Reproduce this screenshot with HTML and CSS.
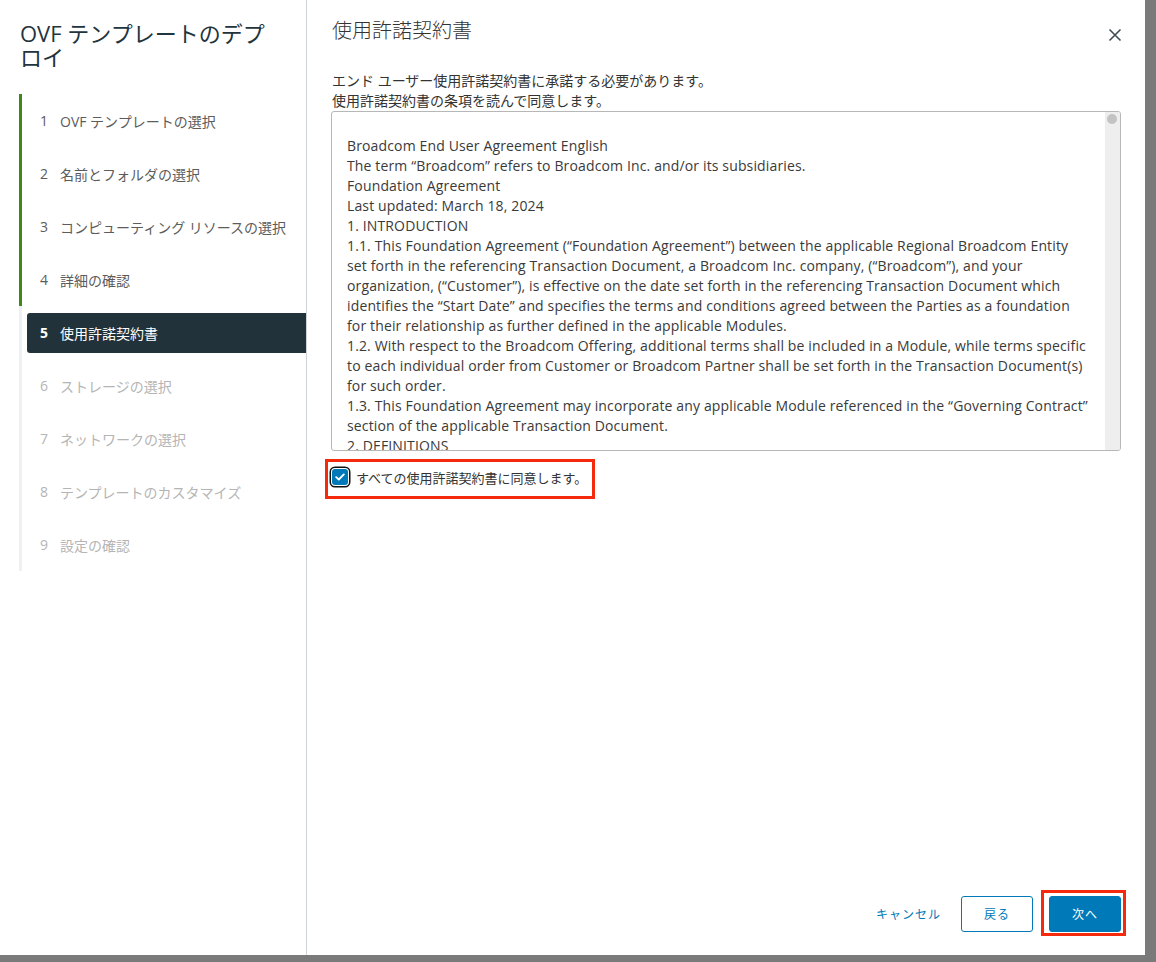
FILE: index.html
```html
<!DOCTYPE html>
<html lang="ja">
<head>
<meta charset="utf-8">
<title>OVF テンプレートのデプロイ</title>
<link rel="stylesheet" href="styles.css">
</head>
<body>
<div class="dialog">
  <aside class="sidebar">
    <h1 class="wiz-title">OVF テンプレートのデプロイ</h1>
    <nav class="steps">
      <div class="step done"><div class="step-inner"><span class="num">1</span><span class="lbl">OVF テンプレートの選択</span></div></div>
      <div class="step done"><div class="step-inner"><span class="num">2</span><span class="lbl">名前とフォルダの選択</span></div></div>
      <div class="step done"><div class="step-inner"><span class="num">3</span><span class="lbl">コンピューティング リソースの選択</span></div></div>
      <div class="step done"><div class="step-inner"><span class="num">4</span><span class="lbl">詳細の確認</span></div></div>
      <div class="step active"><div class="step-inner"><span class="num">5</span><span class="lbl">使用許諾契約書</span></div></div>
      <div class="step todo"><div class="step-inner"><span class="num">6</span><span class="lbl">ストレージの選択</span></div></div>
      <div class="step todo"><div class="step-inner"><span class="num">7</span><span class="lbl">ネットワークの選択</span></div></div>
      <div class="step todo"><div class="step-inner"><span class="num">8</span><span class="lbl">テンプレートのカスタマイズ</span></div></div>
      <div class="step todo"><div class="step-inner"><span class="num">9</span><span class="lbl">設定の確認</span></div></div>
    </nav>
  </aside>
  <main class="main">
    <header class="main-head">
      <h2 class="page-title">使用許諾契約書</h2>
      <button class="close" aria-label="閉じる">
        <svg width="14" height="14" viewBox="0 0 14 14"><path d="M1.5 1.5 L12.5 12.5 M12.5 1.5 L1.5 12.5" stroke="#3c4d56" stroke-width="1.6" fill="none"/></svg>
      </button>
    </header>
    <p class="desc">エンド ユーザー使用許諾契約書に承諾する必要があります。<br>使用許諾契約書の条項を読んで同意します。</p>
    <div class="eula">
      <div class="eula-text">
        <div class="ln">&nbsp;</div>
        <div class="ln">Broadcom End User Agreement English</div>
        <div class="ln">The term “Broadcom” refers to Broadcom Inc. and/or its subsidiaries.</div>
        <div class="ln">Foundation Agreement</div>
        <div class="ln">Last updated: March 18, 2024</div>
        <div class="ln">1. INTRODUCTION</div>
        <div class="ln">1.1. This Foundation Agreement (“Foundation Agreement”) between the applicable Regional Broadcom Entity</div>
        <div class="ln">set forth in the referencing Transaction Document, a Broadcom Inc. company, (“Broadcom”), and your</div>
        <div class="ln">organization, (“Customer”), is effective on the date set forth in the referencing Transaction Document which</div>
        <div class="ln">identifies the “Start Date” and specifies the terms and conditions agreed between the Parties as a foundation</div>
        <div class="ln">for their relationship as further defined in the applicable Modules.</div>
        <div class="ln">1.2. With respect to the Broadcom Offering, additional terms shall be included in a Module, while terms specific</div>
        <div class="ln">to each individual order from Customer or Broadcom Partner shall be set forth in the Transaction Document(s)</div>
        <div class="ln">for such order.</div>
        <div class="ln">1.3. This Foundation Agreement may incorporate any applicable Module referenced in the “Governing Contract”</div>
        <div class="ln">section of the applicable Transaction Document.</div>
        <div class="ln">2. DEFINITIONS</div>
      </div>
      <div class="scrollbar"><span class="thumb"></span></div>
    </div>
    <label class="agree hl">
      <span class="cb"><svg width="10" height="8" viewBox="0 0 10 8"><path d="M1.2 4.2 L3.8 6.5 L8.8 1.4" stroke="#fff" stroke-width="1.8" fill="none" stroke-linecap="round" stroke-linejoin="round"/></svg></span>
      <span class="agree-lbl">すべての使用許諾契約書に同意します。</span>
    </label>
    <footer class="footer">
      <button class="btn-flat">キャンセル</button>
      <button class="btn-outline">戻る</button>
      <button class="btn-primary hl2">次へ</button>
    </footer>
  </main>
</div>
</body>
</html>
```
FILE: styles.css
```css
html, body {
  margin: 0;
  padding: 0;
}
body {
  background: #7a7a7a;
  width: 1156px;
  height: 962px;
  overflow: hidden;
  font-family: "Open Sans", "Noto Sans CJK JP", sans-serif;
}
.dialog {
  width: 1145px;
  height: 955px;
  background: #fff;
  display: flex;
}
.sidebar {
  width: 306px;
  border-right: 1px solid #cdd3d7;
  padding-top: 21px;
  box-sizing: content-box;
  flex: none;
}
.wiz-title {
  margin: 0 0 0 20px;
  font-family: "Open Sans", "Noto Sans CJK JP", sans-serif;
  font-size: 22px;
  line-height: 24px;
  font-weight: 400;
  color: #22343c;
  padding-right: 20px;
}
.steps {
  margin-top: 25px;
  margin-left: 19px;
}
.step {
  height: 53px;
  border-left: 3px solid #eef1f4;
  padding-left: 5px;
  display: flex;
  align-items: center;
}
.step.done {
  border-left-color: #3f8a16;
}
.step-inner {
  flex: 1;
  height: 40px;
  display: flex;
  align-items: center;
  padding-left: 13px;
  border-radius: 3px 0 0 3px;
  font-size: 14px;
  color: #5c5c5c;
}
.num {
  width: 20px;
  flex: none;
  font-family: "Open Sans", sans-serif;
}
.lbl {
  white-space: nowrap;
}
.step.todo .step-inner {
  color: #b5b5b5;
}
.step.active .step-inner {
  background: #22323b;
  color: #fff;
}
.step.active .num {
  font-weight: 700;
}
.main {
  flex: 1;
  display: flex;
  flex-direction: column;
  padding: 19px 24px 0 24px;
  min-width: 0;
}
.main-head {
  display: flex;
  align-items: flex-start;
  justify-content: space-between;
}
.page-title {
  margin: 0 0 0 1px;
  font-size: 20px;
  line-height: 24px;
  font-weight: 300;
  color: #333;
}
.close {
  border: 0;
  background: none;
  padding: 0;
  margin-top: 9px;
  margin-right: -1px;
  width: 14px;
  height: 14px;
  display: flex;
}
.desc {
  margin: 28px 0 0 1px;
  font-size: 14px;
  line-height: 20px;
  color: #333;
}
.eula {
  height: 340px;
  box-sizing: border-box;
  border: 1px solid #b7b7b7;
  border-radius: 3px;
  display: flex;
  overflow: hidden;
}
.eula-text {
  flex: 1;
  overflow: hidden;
  padding: 4px 0 0 15px;
  font-size: 14px;
  line-height: 20px;
  letter-spacing: 0.14px;
  color: #3a3a3a;
}
.ln {
  white-space: nowrap;
}
.scrollbar {
  width: 15px;
  flex: none;
  background: #eeeeee;
  position: relative;
}
.thumb {
  position: absolute;
  left: 2px;
  top: 2px;
  width: 10px;
  height: 10px;
  border-radius: 50%;
  background: #c3c3c3;
}
.agree {
  align-self: flex-start;
  display: inline-flex;
  align-items: center;
  margin-top: 16px;
  margin-left: 1px;
  height: 20px;
  gap: 8px;
  position: relative;
}
.cb {
  width: 16px;
  height: 16px;
  border-radius: 3px;
  background: #0079b8;
  box-shadow: 0 0 0 1px #fff, 0 0 0 2.5px #111;
  display: flex;
  align-items: center;
  justify-content: center;
}
.agree-lbl {
  font-size: 13px;
  color: #333;
}
.hl::after {
  content: "";
  position: absolute;
  top: -8px;
  bottom: -12px;
  left: -7px;
  right: -8px;
  border: 3px solid #f52a0c;
  pointer-events: none;
}
.footer {
  margin-top: auto;
  display: flex;
  justify-content: flex-end;
  align-items: center;
  padding-bottom: 23px;
}
.footer button {
  font-family: "Open Sans", "Noto Sans CJK JP", sans-serif;
  font-size: 12px;
  letter-spacing: 1px;
  height: 36px;
  border-radius: 3px;
  box-sizing: border-box;
  cursor: pointer;
}
.btn-flat {
  border: 0;
  background: none;
  color: #0079b8;
  padding: 0 12px;
  margin-right: 8px;
}
.btn-outline {
  width: 72px;
  border: 1px solid #0079b8;
  background: #fff;
  color: #0079b8;
  margin-right: 16px;
}
.btn-primary {
  width: 72px;
  border: 1px solid #0079b8;
  background: #0079b8;
  color: #fff;
  position: relative;
}
.hl2::after {
  content: "";
  position: absolute;
  top: -7px;
  bottom: -5px;
  left: -9px;
  right: -6px;
  border: 3px solid #f52a0c;
  pointer-events: none;
}
```
